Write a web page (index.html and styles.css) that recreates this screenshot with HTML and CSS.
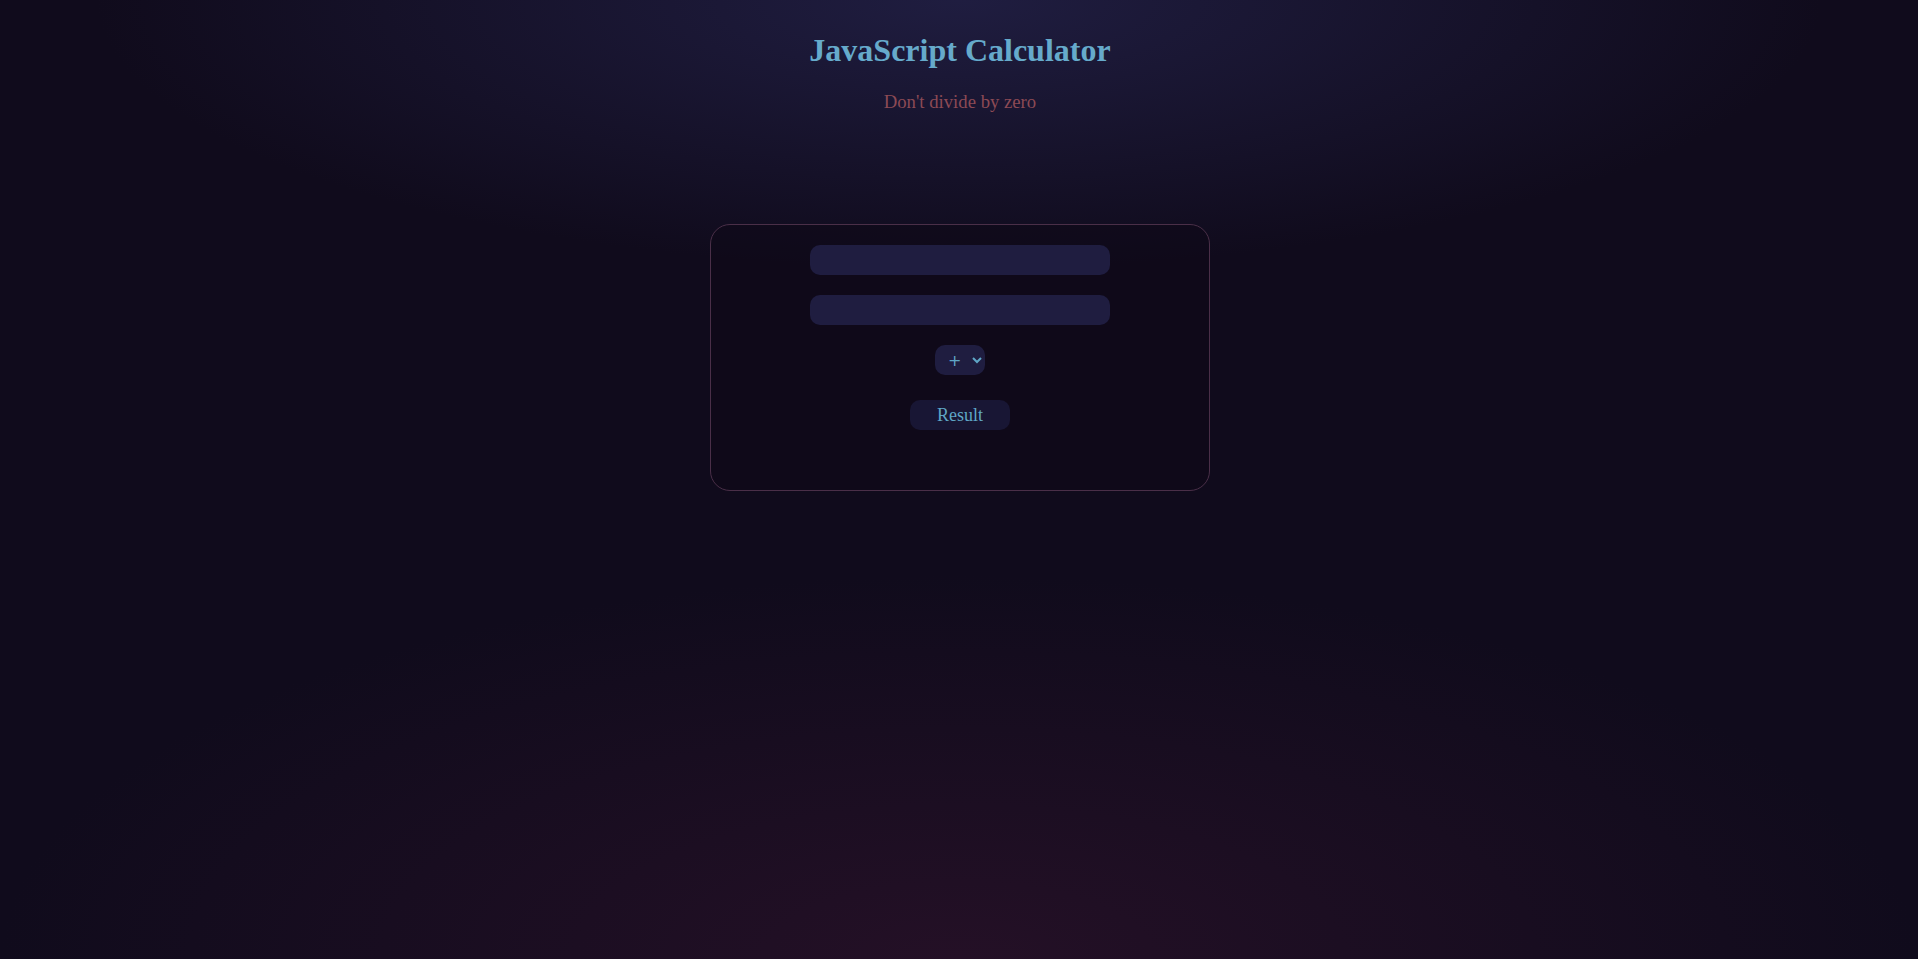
FILE: index.html
```html
<!DOCTYPE html>
<html lang="en">
<head>
<meta charset="utf-8">
<title>JavaScript Calculator</title>
<link rel="stylesheet" href="styles.css">
</head>
<body>
<main class="page">
  <h1 class="title">JavaScript Calculator</h1>
  <h3 class="subtitle">Don't divide by zero</h3>
  <section class="card">
    <input class="field" type="text">
    <input class="field" type="text">
    <select class="operator">
      <option>+</option>
      <option>-</option>
      <option>*</option>
      <option>/</option>
    </select>
    <button class="result-btn" type="button">Result</button>
    <div class="output"></div>
  </section>
</main>
</body>
</html>
```

FILE: styles.css
```css
html, body {
  height: 100%;
}
body {
  margin: 0;
  padding: 8px 7px 8px 9px;
  box-sizing: border-box;
  font-family: "Liberation Serif", "Times New Roman", serif;
  background:
    radial-gradient(ellipse 45% 28% at 50% 0%, rgba(32, 30, 66, 0.95), rgba(32, 30, 66, 0) 100%),
    radial-gradient(ellipse 50% 40% at 50% 100%, rgba(36, 16, 38, 1), rgba(36, 16, 38, 0) 100%),
    #100b1c;
  color: #5fa6c6;
}
.page {
  display: flex;
  flex-direction: column;
  align-items: center;
}
.title {
  font-size: 32px;
  font-weight: bold;
  margin: 23.5px 0 0;
  color: #66aacb;
}
.subtitle {
  font-size: 18.72px;
  font-weight: normal;
  margin: 22px 0 0;
  color: #8c4a55;
}
.card {
  margin-top: 111.5px;
  width: 500px;
  box-sizing: border-box;
  border: 1px solid #4a2f48;
  border-radius: 20px;
  background: rgba(14, 9, 24, 0.55);
  padding: 20px 0 0;
  display: flex;
  flex-direction: column;
  align-items: center;
}
.field {
  width: 300px;
  height: 30px;
  box-sizing: border-box;
  border: none;
  border-radius: 10px;
  background: #1f1d40;
  color: #66aacb;
  font-family: inherit;
  font-size: 16px;
  padding: 0 10px;
  margin-bottom: 20px;
  outline: none;
}
.operator {
  width: 50px;
  height: 30px;
  box-sizing: border-box;
  border: none;
  border-radius: 10px;
  background: #1f1d40;
  color: #5fa6c6;
  font-family: "DejaVu Sans", sans-serif;
  font-size: 16px;
  padding: 0 0 0 9px;
  margin-bottom: 25px;
  outline: none;
}
.result-btn {
  width: 100px;
  height: 30px;
  border: none;
  border-radius: 10px;
  background: #181634;
  color: #5fa6c6;
  font-family: "Liberation Serif", "Times New Roman", serif;
  font-size: 18px;
  padding: 0;
  cursor: pointer;
}
.output {
  height: 60px;
}
```
